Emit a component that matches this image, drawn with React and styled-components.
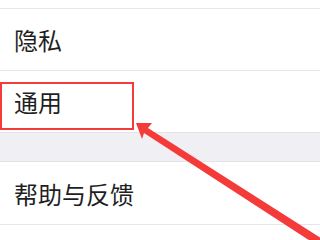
import React from "react";
import styled, { createGlobalStyle } from "styled-components";

const Global = createGlobalStyle`
  html, body {
    margin: 0;
    padding: 0;
    background: #ffffff;
    font-family: "Noto Sans CJK SC", "Noto Sans", sans-serif;
  }
`;

const Screen = styled.div`
  position: relative;
  width: 320px;
  height: 240px;
  overflow: hidden;
  background: #ffffff;
`;

const TopSpace = styled.div`
  height: 8px;
`;

const Group = styled.div`
  display: flex;
  flex-direction: column;
`;

const Row = styled.div`
  position: relative;
  height: 62px;
  display: flex;
  align-items: center;
  padding-left: 14px;
  border-top: 1px solid ${(p) => (p.$noTop ? "transparent" : "#e6e6e8")};
  font-size: 24px;
  line-height: 1;
  color: #1f1f1f;
  box-sizing: border-box;
`;

const Gap = styled.div`
  height: 28px;
  background: #efeff4;
  border-top: 1px solid #e3e3e8;
  border-bottom: 1px solid #e3e3e8;
`;

const Highlight = styled.div`
  position: absolute;
  left: 0;
  top: 11px;
  width: 134px;
  height: 48px;
  border: 2px solid #f53a3a;
  box-sizing: border-box;
`;

const Arrow = styled.svg`
  position: absolute;
  left: 0;
  top: 0;
  pointer-events: none;
`;

export default function App() {
  return (
    <Screen>
      <Global />
      <TopSpace />
      <Group>
        <Row>隐私</Row>
        <Row>
          通用
          <Highlight />
        </Row>
      </Group>
      <Gap />
      <Group>
        <Row $noTop>帮助与反馈</Row>
        <Row />
      </Group>
      <Arrow width="320" height="240" viewBox="0 0 320 240">
        <polygon
          points="136,123 152,123 148,128 324,240 318,246 144,133 142,139"
          fill="#f53a3a"
        />
      </Arrow>
    </Screen>
  );
}
